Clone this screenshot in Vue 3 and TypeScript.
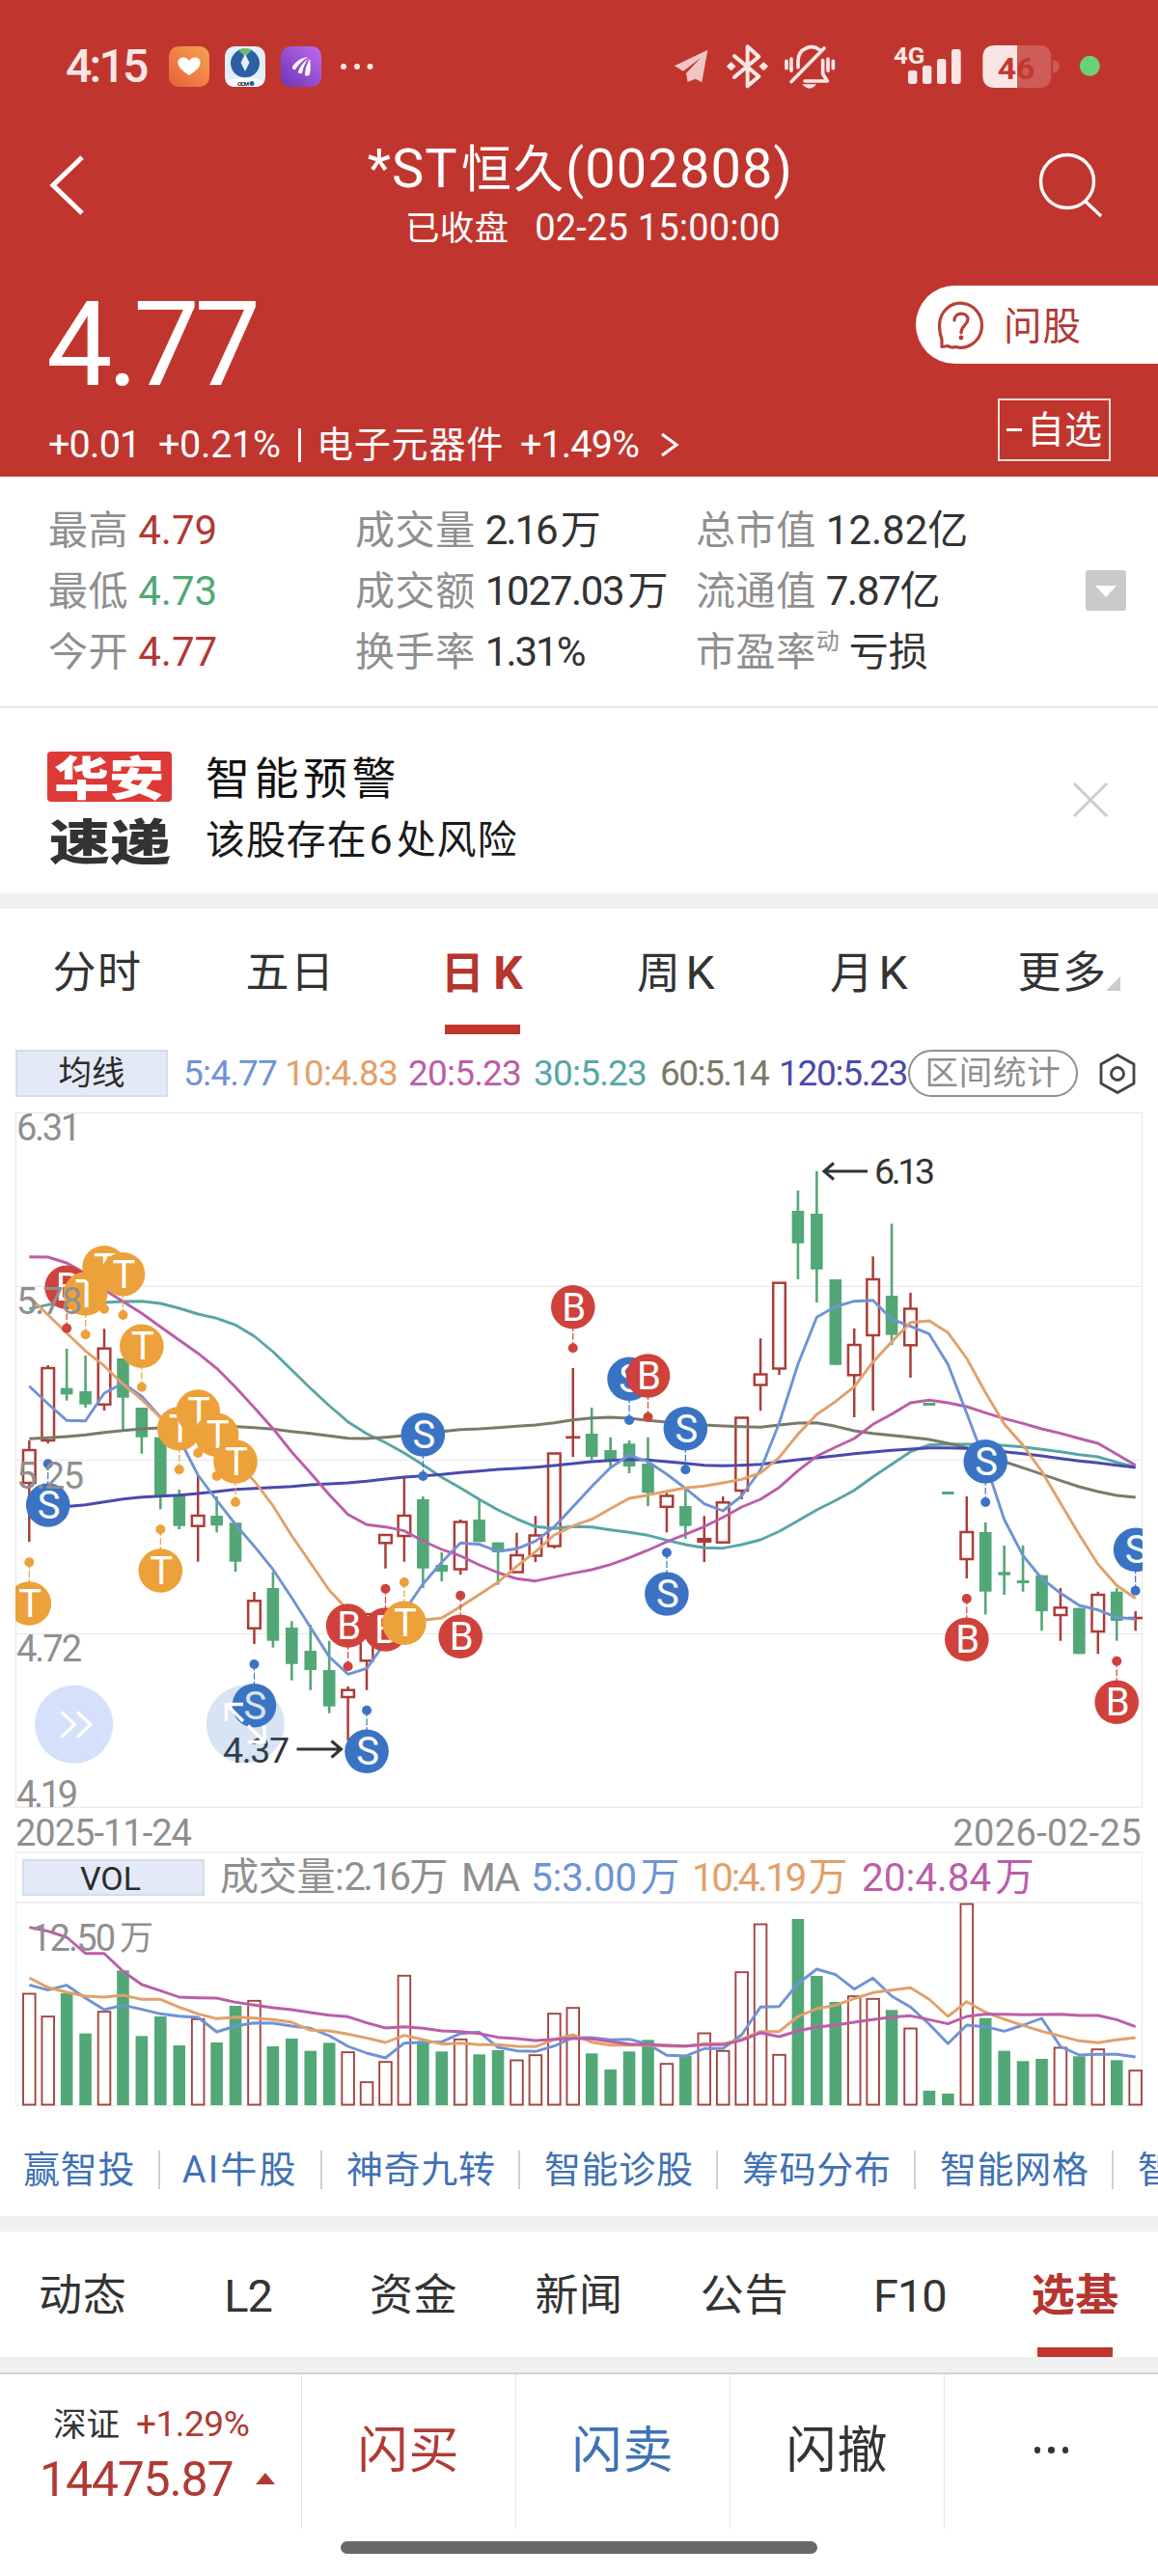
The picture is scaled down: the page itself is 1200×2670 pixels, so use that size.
<script setup lang="ts">
type Kind = 'r' | 'g'
type Candle = [Kind, number, number, number, number]
type Mark = [number, 'T' | 'S' | 'B', number, number]

const X0 = 30.3
const STEP = 19.43
const cx = (i: number): number => X0 + STEP * i

const candles: Candle[] = [
  ['r', 1493, 1503, 1537, 1598], ['r', 1415, 1418, 1493, 1496], ['g', 1398, 1438.7, 1445.3, 1451.7],
  ['g', 1405, 1442, 1455.7, 1459], ['r', 1377.3, 1397.7, 1455.7, 1462], ['g', 1408, 1408, 1448.7, 1482.7],
  ['g', 1459, 1459, 1489.7, 1506.7], ['g', 1489.7, 1489.7, 1550, 1564.3], ['g', 1544, 1549, 1581.7, 1585],
  ['r', 1529, 1571, 1581.7, 1618.7], ['g', 1551, 1571, 1581.3, 1588.3], ['g', 1578.3, 1578.3, 1618.7, 1629],
  ['r', 1650, 1659.3, 1687.7, 1704], ['g', 1629.3, 1646, 1700.7, 1707.7], ['g', 1680.3, 1687, 1724.7, 1741.7],
  ['g', 1684, 1711, 1731, 1751.7], ['g', 1700.7, 1731, 1768.7, 1775.7], ['r', 1748, 1751.7, 1759, 1804],
  ['r', 1672, 1673, 1721.3, 1751.7], ['r', 1591, 1591, 1599.3, 1625.7], ['r', 1531.7, 1571, 1592, 1618.7],
  ['g', 1551, 1554, 1625.7, 1646], ['g', 1609, 1622, 1629, 1639], ['r', 1575, 1577.5, 1626.5, 1632.3],
  ['g', 1554, 1575, 1598.3, 1598.3], ['g', 1598.7, 1598.7, 1609, 1642.7], ['r', 1588.7, 1612, 1629.5, 1630],
  ['r', 1571.3, 1591.5, 1612.5, 1619], ['r', 1506.5, 1506.5, 1602.5, 1605], ['r', 1418, 1489.7, 1489.7, 1510],
  ['g', 1459, 1486, 1510, 1513.3], ['g', 1489.7, 1503, 1513.3, 1521.7], ['g', 1493, 1496.3, 1520, 1527],
  ['g', 1489.7, 1517, 1547.3, 1561], ['r', 1547.3, 1550.5, 1561.8, 1588.3], ['g', 1543.3, 1561, 1581.7, 1595],
  ['r', 1571.3, 1595.2, 1597.7, 1619], ['r', 1551, 1557.3, 1598.7, 1599], ['r', 1469.5, 1469.5, 1545, 1554],
  ['r', 1387.3, 1424.5, 1435.5, 1462.3], ['r', 1329.7, 1329.7, 1418.5, 1425], ['g', 1234, 1255, 1288.7, 1326],
  ['g', 1214, 1258, 1315.7, 1350], ['g', 1326, 1326, 1414.7, 1414.7], ['r', 1377, 1394, 1425.3, 1469],
  ['r', 1302.3, 1326, 1384, 1462.3], ['g', 1268.3, 1343, 1383.7, 1394], ['r', 1340, 1356.5, 1394.3, 1428],
  ['g', 1454, 1454, 1457, 1457], ['g', 1546, 1546, 1549, 1549], ['r', 1551, 1588, 1616, 1636],
  ['g', 1578, 1588, 1649.7, 1673.3], ['g', 1602, 1629.3, 1632.7, 1653], ['g', 1602, 1638, 1641, 1649.7],
  ['g', 1632.7, 1632.7, 1670, 1690.3], ['r', 1646, 1666.3, 1674, 1700.7], ['g', 1666.7, 1666.7, 1714.3, 1714.3],
  ['r', 1649.7, 1653, 1691, 1714.3], ['g', 1646, 1649.7, 1680, 1700.7], ['r', 1670, 1677, 1677, 1690.3],
]

const averages: { color: string; ys: number[] }[] = [
  { color: '#57a6a5', ys: [1356.7, 1352.3, 1350, 1350, 1350, 1349, 1348.7, 1351, 1356, 1362, 1366.3, 1373.3, 1385, 1401, 1420, 1439, 1457, 1473.7, 1486, 1495.3, 1506, 1518.3, 1531.3, 1542.3, 1554, 1565, 1574.3, 1582.3, 1584.3, 1582.3, 1582.7, 1585.7, 1588.3, 1591.3, 1596.3, 1601, 1604.3, 1604.7, 1601, 1596, 1587.3, 1576.3, 1565, 1555.3, 1544.7, 1530.7, 1517.7, 1504.7, 1497.7, 1496.7, 1497, 1497, 1498.3, 1499.7, 1502.3, 1504.7, 1507.7, 1510, 1515.7, 1520.7] },
  { color: '#7a7a68', ys: [1491.3, 1490.3, 1489, 1487.3, 1484.7, 1482.7, 1481, 1480, 1479, 1478.5, 1478, 1478.7, 1479.7, 1481.3, 1483.7, 1485.7, 1488.3, 1490.7, 1491, 1489.7, 1488, 1485.8, 1483.7, 1481.7, 1481, 1479.7, 1478.3, 1477, 1474.7, 1471.7, 1469.7, 1469, 1470, 1472.3, 1474, 1475.7, 1477, 1478, 1478.7, 1479.3, 1477, 1475, 1474.7, 1478.3, 1483, 1485.7, 1487.7, 1489.7, 1492, 1496, 1500.7, 1508, 1515, 1521.3, 1528, 1534.7, 1541, 1546, 1550, 1552] },
  { color: '#4a49ae', ys: [1565, 1563.5, 1561.5, 1559.7, 1556.7, 1553.7, 1551.7, 1550.7, 1549.7, 1548, 1546, 1543.7, 1542.7, 1541.7, 1540.7, 1539, 1538, 1537, 1535.3, 1533, 1531, 1529.7, 1528.3, 1526.3, 1524.7, 1523, 1522, 1520.7, 1519, 1517, 1515, 1513.7, 1512.7, 1513.3, 1515, 1516.7, 1518.7, 1519.3, 1518.7, 1517.7, 1515.3, 1513, 1511, 1509, 1506.7, 1505, 1503.3, 1502, 1500.7, 1500.7, 1501.3, 1502.5, 1504.7, 1506.7, 1509, 1511.7, 1514.3, 1516.3, 1518.7, 1521] },
  { color: '#bb5ea8', ys: [1302.7, 1303, 1309, 1320, 1336.7, 1349, 1361.3, 1375.3, 1389, 1402.7, 1418.3, 1437.7, 1459, 1480.7, 1505, 1526.7, 1549.3, 1569.7, 1580.3, 1582.7, 1586.7, 1597.3, 1606, 1612.7, 1622, 1630, 1636.3, 1638.7, 1634.7, 1630.7, 1627, 1621.7, 1614.7, 1606.7, 1598, 1590.3, 1582.3, 1572.7, 1562, 1554, 1541.7, 1524.3, 1509.3, 1500, 1491, 1476.3, 1465.7, 1454, 1451.3, 1454, 1458, 1464.3, 1470.3, 1475.3, 1481, 1485.7, 1491, 1496, 1507.3, 1518.7] },
  { color: '#6f93d4', ys: [1436.7, 1455, 1472.3, 1472.7, 1444, 1433.7, 1447.3, 1469, 1491, 1529, 1555, 1580, 1602.7, 1626.7, 1656, 1686.7, 1717.3, 1735.3, 1729.3, 1702, 1670, 1641.7, 1619.3, 1599.3, 1600.7, 1608, 1605.3, 1597.3, 1582.7, 1561.7, 1540.7, 1521.3, 1508.3, 1515, 1528, 1542.7, 1558.7, 1566, 1550.5, 1523.5, 1475, 1414, 1365.3, 1354.3, 1348.7, 1347.7, 1367.3, 1374.7, 1382.7, 1414.3, 1465, 1516, 1575, 1612.3, 1636, 1651.3, 1664, 1668.7, 1676.3, 1678.3] },
  { color: '#e2a06a', ys: [1344.3, 1362.7, 1381.7, 1400.3, 1415.7, 1434.7, 1450.7, 1469.3, 1480, 1492, 1503, 1516, 1535, 1560.7, 1591.7, 1620, 1648.3, 1669, 1683, 1685, 1682, 1679.3, 1677, 1665.3, 1652.7, 1640, 1623.3, 1608.3, 1591, 1581.7, 1574.7, 1563.7, 1553, 1549.7, 1545.7, 1542.3, 1540.3, 1537, 1533.3, 1526.7, 1510.7, 1486.5, 1466, 1452.7, 1437.3, 1411.7, 1390.7, 1370.7, 1369, 1381.3, 1408, 1443.3, 1476, 1498, 1525, 1558, 1590.7, 1621.3, 1643.3, 1656.7] },
]

const marks: Mark[] = [
  [0, 'T', 1662, 1619.3], [1, 'S', 1560, 1517.3], [2, 'B', 1334.3, 1376.7], [3, 'T', 1341, 1383.3],
  [4, 'T', 1313.7, 1356.7], [5, 'T', 1320.7, 1363], [6, 'T', 1395.3, 1437.7], [7, 'T', 1628, 1585.3],
  [8, 'T', 1480.7, 1523.3], [9, 'T', 1463, 1506], [10, 'T', 1487.3, 1530], [11, 'T', 1515, 1557],
  [12, 'S', 1767.7, 1725], [17, 'B', 1685, 1727.3], [18, 'S', 1815.3, 1772.7], [19, 'B', 1689, 1646.7],
  [20, 'T', 1682.3, 1640], [21, 'S', 1487, 1530], [23, 'B', 1696.3, 1653.7], [29, 'B', 1354.7, 1397.3],
  [32, 'S', 1429.3, 1472], [33, 'B', 1426, 1468.7], [34, 'S', 1652, 1609.3], [35, 'S', 1480.7, 1523.3],
  [50, 'B', 1699.3, 1657], [51, 'S', 1514.7, 1557], [58, 'B', 1764.3, 1721.7], [59, 'S', 1606.3, 1648.7],
]
const markColor = { T: '#eda13a', S: '#3b73c4', B: '#cf423b' }

const priceLabels: { t: string; y: number; w: number }[] = [
  { t: '6.31', y: 1182, w: 67 }, { t: '5.78', y: 1361.7, w: 68 }, { t: '5.25', y: 1543, w: 70 },
  { t: '4.72', y: 1721.5, w: 68 }, { t: '4.19', y: 1872.5, w: 64 },
]

// Volume series are kept in thirds of a pixel above the panel origin.
const VOL_Y = 1860
const vy = (v: number): number => VOL_Y + v / 3
const volTops = [618, 689, 618, 743, 674, 547, 751, 690, 780, 697, 771, 657, 640, 783, 759, 797, 772, 800, 893, 830, 562, 767, 799, 760, 808, 795, 825, 809, 680, 662, 805, 855, 799, 763, 836, 812, 741, 796, 551, 402, 808, 387, 564, 645, 626, 634, 670, 726, 921, 930, 339, 695, 797, 829, 822, 786, 814, 791, 826, 857]
const volKinds = 'rrggrgggg' + 'rggrggggrrrrggrggrrrr' + 'ggggrgrrrrrgggrrgrggrggggrgrgr'
const volLines: { color: string; vs: number[] }[] = [
  { color: '#6f93d4', vs: [592, 608, 593, 633, 669, 655, 668, 682, 689, 693, 738, 720, 710, 711, 720, 727, 750, 783, 804, 819, 773, 770, 769, 743, 739, 786, 797, 799, 782, 756, 756, 763, 761, 776, 811, 813, 790, 790, 747, 661, 659, 588, 543, 560, 605, 571, 627, 661, 714, 775, 717, 722, 736, 717, 696, 784, 810, 808, 808, 816] },
  { color: '#e2a06a', vs: [570, 600, 615, 627, 630, 624, 637, 637, 661, 682, 697, 692, 695, 700, 708, 733, 735, 745, 757, 771, 749, 762, 776, 773, 778, 778, 783, 784, 762, 747, 770, 779, 779, 779, 782, 783, 775, 775, 761, 737, 737, 690, 666, 655, 635, 616, 608, 601, 637, 690, 644, 677, 699, 718, 736, 751, 766, 772, 763, 756] },
  { color: '#bb5ea8', vs: [413, 425, 444, 494, 494, 550, 591, 610, 630, 632, 633, 646, 655, 663, 669, 678, 686, 691, 710, 726, 722, 727, 735, 737, 743, 755, 759, 765, 761, 758, 760, 768, 776, 777, 780, 782, 778, 778, 764, 741, 753, 735, 723, 717, 708, 700, 692, 688, 700, 713, 690, 683, 683, 685, 684, 683, 687, 687, 700, 722] },
]
const line = (ys: number[]): string => ys.map((y, i) => `${cx(i).toFixed(1)},${y.toFixed(1)}`).join(' ')

const periods = [['分时', ''], ['五日', ''], ['日', 'K'], ['周', 'K'], ['月', 'K'], ['更多', '']]
const maValues = [
  { t: '5:4.77', c: '#6f93d4' }, { t: '10:4.83', c: '#e2a06a' }, { t: '20:5.23', c: '#bb5ea8' },
  { t: '30:5.23', c: '#57a6a5' }, { t: '60:5.14', c: '#7a7a68' }, { t: '120:5.23', c: '#4a49ae' },
]
const tools = ['赢智投', 'AI牛股', '神奇九转', '智能诊股', '筹码分布', '智能网格', '智能']
const sections = ['动态', 'L2', '资金', '新闻', '公告', 'F10', '选基']
</script>

<template>
  <div class="page">
    <header class="top">
      <div class="status">
        <span class="clock">4:15</span>
        <svg class="apps" width="220" height="44" viewBox="0 0 220 44">
          <defs>
            <linearGradient id="ga" x1="1" y1="0" x2="0" y2="1"><stop offset="0" stop-color="#f2a64e" /><stop offset="1" stop-color="#ea5f3c" /></linearGradient>
            <linearGradient id="gb" x1="1" y1="0" x2="0" y2="1"><stop offset="0" stop-color="#c06bf0" /><stop offset="1" stop-color="#6a35b4" /></linearGradient>
          </defs>
          <rect x="0" y="1" width="42" height="42" rx="10" fill="url(#ga)" />
          <path d="M21 31C10 24 9 20 9.500 16.500C10.500 11.500 18 11 21 16C24 11 31.500 11.500 32.500 16.500C33 20 32 24 21 31Z" fill="#fff" />
          <rect x="58" y="1" width="42" height="42" rx="10" fill="#e4eefb" />
          <circle cx="79" cy="18.500" r="15" fill="#2b5fa6" />
          <path d="M72 4.500Q79 2 86 4.500L79 12Z" fill="#6dbb6a" />
          <path d="M79 9L83.500 18L79 27L74.500 18Z" fill="#e4eefb" />
          <path d="M59 37Q79 30 99 37Q97 43 89 43H69Q61 43 59 37Z" fill="#fff" />
          <text x="71" y="42" font-size="6" font-weight="700" fill="#222" textLength="12">CICM</text><circle cx="86" cy="39.500" r="2.500" fill="#2b5fa6" />
          <rect x="116" y="1" width="42" height="42" rx="10" fill="url(#gb)" />
          <path d="M144 12C137 13 131 17 128 22Q128 26 131 25C134 20 138 16 144 12ZM145 13C139 18 135 23 134 28Q135 30 138 29C139 23 141 18 145 13ZM146 14C143 19 141 25 141 31Q144 33 146 30C147 25 147 19 146 14Z" fill="#fff" />
          <g fill="#f9e6e4"><circle cx="181" cy="22" r="3" /><circle cx="195" cy="22" r="3" /><circle cx="208.500" cy="22" r="3" /></g>
        </svg>
        <svg class="signals" width="470" height="70" viewBox="0 0 1410 210">
          <g fill="#f9e6e4">
            <path d="M57 97L160 47L142 148L122 137L98 147L93 120L138 72L84 113Z" opacity=".82" />
            <path d="M243 66L319 130L284 160V37L319 68L243 132" fill="none" stroke="#f9e6e4" stroke-width="12" stroke-linejoin="round" stroke-linecap="round" />
            <path d="M220 98L233 86L246 98L233 111ZM321 98L334 86L347 98L334 111Z" stroke="#f9e6e4" stroke-width="3" stroke-linejoin="round" />
            <g fill="none" stroke="#f9e6e4" stroke-width="11" stroke-linecap="round" stroke-linejoin="round">
              <path d="M420 146L522 42M441 102V82C441 40 485 29 508 47M462 144H532L518 122V80M405 82V104M420 75V112M534 75V112M550 82V104" />
            </g>
            <path d="M454 154H498Q478 180 454 154Z" />
            <text x="738" y="91" font-size="74" font-weight="700" textLength="97" lengthAdjust="spacingAndGlyphs">4G</text>
            <rect x="783" y="111" width="28" height="42" rx="8" /><rect x="828" y="96" width="28" height="57" rx="8" />
            <rect x="873" y="75" width="28" height="78" rx="8" /><rect x="918" y="45" width="29" height="108" rx="8" />
            <path d="M1122 33H1054Q1015 33 1015 72V126Q1015 165 1054 165H1122Z" />
            <path d="M1122 33H1190Q1228 33 1228 72V126Q1228 165 1190 165H1122ZM1233 78Q1254 84 1254 99Q1254 114 1233 120Z" opacity=".22" />
          </g>
          <text x="1061" y="138" font-size="96" font-weight="700" fill="#c43832" textLength="116" lengthAdjust="spacingAndGlyphs">46</text>
          <circle cx="1348" cy="97" r="31.500" fill="#6ad276" />
        </svg>
      </div>

      <div class="titlebar">
        <svg class="back" width="40" height="66" viewBox="0 0 40 66"><path d="M35 4L5 33L35 62" fill="none" stroke="#fff" stroke-width="5" /></svg>
        <div class="title">
          <div class="name">*ST<span>恒久</span>(002808)</div>
          <div class="time"><span>已收盘</span>02-25 15:00:00</div>
        </div>
        <svg class="search" width="70" height="70" viewBox="0 0 70 70"><g fill="none" stroke="#fff" stroke-width="3.400"><circle cx="33" cy="32" r="27.500" /><path d="M51 52L68 68" /></g></svg>
      </div>

      <div class="quote">
        <div class="price">
          <div class="last">4.77</div>
          <div class="change">
            <span class="c1">+0.01</span><span class="c2">+0.21%</span><i></i><span class="c3">电子元器件</span><span class="c4">+1.49%</span>
            <svg width="20" height="26" viewBox="0 0 20 26"><path d="M2 2L17 13L2 24" fill="none" stroke="#fff" stroke-width="3.200" /></svg>
          </div>
        </div>
        <div class="actions">
          <div class="ask">
            <svg width="48" height="50" viewBox="0 0 48 50"><g fill="none" stroke="#b8403a" stroke-width="3.200" stroke-linejoin="round"><path d="M4 47.500V40Q1.500 33 1.500 25A22 23 0 1 1 18 47.500Q14 49 10.500 46.500Z" /><path d="M17 20C17 11 31 11 31 19C31 25 24 25 24 33" stroke-linecap="round" /></g><circle cx="24" cy="38" r="2.400" fill="#b8403a" /></svg>
            <span>问股</span>
          </div>
          <div class="fav"><b></b>自选</div>
        </div>
      </div>
    </header>

    <section class="stats">
      <div class="stat"><label>最高</label><em class="up">4.79</em></div>
      <div class="stat"><label>成交量</label><em class="tighter">2.16<s></s>万</em></div>
      <div class="stat"><label>总市值</label><em>12.82亿</em></div>
      <div class="stat"><label>最低</label><em class="down">4.73</em></div>
      <div class="stat"><label>成交额</label><em class="tight">1027.03<s></s>万</em></div>
      <div class="stat"><label>流通值</label><em class="tight">7.87亿</em></div>
      <div class="stat"><label>今开</label><em class="up">4.77</em></div>
      <div class="stat"><label>换手率</label><em class="tighter">1.31%</em></div>
      <div class="stat"><label>市盈率<sup>动</sup></label><em>亏损</em></div>
      <div class="expand"><i></i></div>
    </section>

    <section class="notice">
      <div class="brand"><div class="b1"><span>华安</span></div><div class="b2"><span>速递</span></div></div>
      <div class="msg"><h3>智能预警</h3><p>该股存在<b>6</b>处风险</p></div>
      <svg width="38" height="38" viewBox="0 0 38 38"><path d="M2 2L36 36M36 2L2 36" stroke="#cdcdcd" stroke-width="3" /></svg>
    </section>

    <nav class="periods">
      <div v-for="(p, i) in periods" :key="i" :class="{ on: i === 2 }"><span>{{ p[0] }}<b v-if="p[1]">{{ p[1] }}</b></span><i v-if="i === 5"></i></div>
    </nav>

    <div class="legend">
      <div class="chip">均线</div>
      <div class="vals"><span v-for="m in maValues" :key="m.t" :style="{ color: m.c }">{{ m.t }}</span></div>
      <div class="range">区间统计</div>
      <svg width="40" height="44" viewBox="0 0 40 44"><g fill="none" stroke="#444" stroke-width="2.800" stroke-linejoin="round"><path d="M20 2.500L37 12V32L20 41.500L3 32V12Z" /><circle cx="20" cy="22" r="6.500" /></g></svg>
    </div>

    <svg class="kline" width="1200" height="722" viewBox="0 1153 1200 722">
      <clipPath id="plot"><rect x="16" y="1153" width="1168" height="722" /></clipPath>
      <g fill="none" stroke="#e9e9e9" stroke-width="1.300">
        <rect x="16.500" y="1153.500" width="1167" height="719.800" />
        <path d="M16 1333.300H1183M16 1513.300H1183M16 1693.300H1183" />
      </g>
      <g clip-path="url(#plot)">
        <g v-for="(c, i) in candles" :key="i">
          <template v-if="c[0] === 'g'">
            <rect :x="cx(i) - 1.300" :y="c[1]" width="2.600" :height="c[4] - c[1]" fill="#55a777" />
            <rect :x="cx(i) - 6.300" :y="c[2]" width="12.600" :height="c[3] - c[2]" fill="#52a776" />
          </template>
          <g v-else fill="none" stroke="#ab3d38" stroke-width="2.500">
            <path :d="`M${cx(i)} ${c[1]}V${c[2]}M${cx(i)} ${c[3]}V${c[4]}`" />
            <rect :x="cx(i) - 6.300" :y="c[2]" width="12.600" :height="Math.max(c[3] - c[2], .1)" />
          </g>
        </g>
        <polyline v-for="a in averages" :key="a.color" :points="line(a.ys)" fill="none" :stroke="a.color" stroke-width="2.900" stroke-linejoin="round" />
        <g v-for="m in marks" :key="m[0]" :fill="markColor[m[1]]">
          <path :d="`M${cx(m[0])} ${m[2]}V${m[3]}`" :stroke="markColor[m[1]]" stroke-width="1.200" stroke-dasharray="7 2" />
          <circle :cx="cx(m[0])" :cy="m[3]" r="5" />
          <circle :cx="cx(m[0])" :cy="m[2]" r="22.800" />
          <text :x="cx(m[0]) + 1" :y="m[2] + 14" fill="#fff" font-size="40" text-anchor="middle">{{ m[1] }}</text>
        </g>
      </g>
      <g fill="#8f8f8f" font-size="38">
        <text v-for="p in priceLabels" :key="p.t" x="17" :y="p.y" :textLength="p.w">{{ p.t }}</text>
      </g>
      <g fill="#333" font-size="37.500">
        <text x="231" y="1827" textLength="69">4.37</text>
        <text x="906" y="1227" textLength="63">6.13</text>
      </g>
      <g fill="none" stroke="#333" stroke-width="3">
        <path d="M307.500 1813H353M343.500 1804.500L353.500 1813L343.500 1821.500M899 1214H854M864 1205.500L854 1214L864 1222.500" />
      </g>
      <circle cx="76.600" cy="1787.300" r="40.500" fill="#d5e0fb" />
      <circle cx="254.300" cy="1787.300" r="40.500" fill="#3b78c5" opacity=".2" />
      <g fill="none" stroke="#fff" stroke-width="3.400">
        <path d="M63.500 1774.500L77.500 1787.500L63.500 1800.500M80 1774.500L94 1787.500L80 1800.500" />
        <path d="M234.500 1784V1766.500H252M235 1767L252 1784M256.500 1805.500H274V1788M273.500 1805L257 1788.500" />
      </g>
    </svg>

    <div class="dates"><span>2025-11-24</span><span class="to">2026-02-25</span></div>

    <div class="vol-head">
      <div class="chip vol">VOL</div>
      <span class="v1">成交量:<u>2.16</u><s></s>万</span><span class="v2">MA</span><span class="v3">5:3.00<s></s>万</span><span class="v4">10:4.19<s></s>万</span><span class="v5">20:4.84<s></s>万</span>
    </div>
    <svg class="volume" width="1200" height="214" viewBox="0 1971 1200 214">
      <path d="M16.500 1971V2182.300H1183.500V1971" fill="none" stroke="#ededed" stroke-width="1.300" />
      <g v-for="(v, i) in volTops" :key="i">
        <rect v-if="volKinds[i] === 'g'" :x="cx(i) - 6.300" :y="vy(v)" width="12.600" :height="2182 - vy(v)" fill="#52a776" />
        <rect v-else :x="cx(i) - 6.300" :y="vy(v) + .5" width="12.600" :height="2181 - vy(v)" fill="#fff" stroke="#a04540" stroke-width="1.900" />
      </g>
      <polyline v-for="a in volLines" :key="a.color" :points="line(a.vs.map(vy))" fill="none" :stroke="a.color" stroke-width="2.900" stroke-linejoin="round" />
      <text x="32" y="2021.500" fill="#8f8f8f" font-size="38" textLength="88">12.50</text>
      <text x="124" y="2021" fill="#8f8f8f" font-size="35">万</text>
    </svg>

    <nav class="tools"><span v-for="(t, i) in tools" :key="i">{{ t }}</span></nav>

    <nav class="sections">
      <div v-for="(s, i) in sections" :key="s" :class="{ on: i === 6, latin: i === 1 || i === 5 }">{{ s }}</div>
    </nav>

    <footer class="trade">
      <div class="index">
        <div class="i1"><span>深证</span><em>+1.29%</em></div>
        <div class="i2">14475.87<i></i></div>
      </div>
      <div class="btn buy">闪买</div>
      <div class="btn sell">闪卖</div>
      <div class="btn">闪撤</div>
      <div class="btn more"><i></i><i></i><i></i></div>
    </footer>
    <div class="home"></div>
  </div>
</template>

<style>
body { margin: 0; background: #fff; }
</style>

<style scoped>
* { box-sizing: border-box; }
.page {
  width: 1200px; height: 2670px; overflow: hidden; background: #fff; color: #333;
  font-family: Roboto, "Noto Sans CJK SC", sans-serif; font-size: 41px;
}
svg { display: block; flex: none; }
em, i, s, u { font-style: normal; text-decoration: none; }
s { display: inline-block; width: 4px; }

.top { height: 494px; background: #c0362f; color: #fff; }
.status { height: 136px; display: flex; align-items: flex-start; }
.clock { margin: 39px 0 0 68px; width: 107px; font-size: 48px; line-height: 60px; font-weight: 500; letter-spacing: -2.700px; color: #f9e6e4; }
.apps { margin-top: 47px; }
.signals { margin: 36px 0 0 285px; }
.titlebar { height: 136px; display: flex; justify-content: space-between; align-items: flex-start; }
.back { margin: 23px 0 0 50px; }
.search { margin: 20px 57px 0 0; }
.title { text-align: center; margin-left: 40px; white-space: nowrap; }
.name { margin-top: 9px; height: 60px; line-height: 60px; font-size: 56px; letter-spacing: 1.100px; font-weight: 400; }
.name span { font-size: 52px; letter-spacing: 2px; margin: 0 0 0 3px; }
.time { margin: 11px 0 0 26px; height: 40px; line-height: 40px; font-size: 38px; letter-spacing: .2px; }
.time span { font-size: 35.500px; margin-right: 27px; }
.quote { display: flex; justify-content: space-between; height: 222px; }
.last { margin: 16px 0 0 48px; height: 140px; line-height: 140px; font-size: 122px; letter-spacing: -5.300px; font-weight: 400; }
.change { margin: 8px 0 0 50px; height: 50px; line-height: 50px; font-size: 39.500px; display: flex; align-items: center; white-space: nowrap; }
.c1 { width: 114px; letter-spacing: -.8px; }
.c2 { width: 145px; letter-spacing: -.3px; }
.change i { width: 3px; height: 35px; background: #fff; }
.c3 { margin-left: 16px; width: 211px; font-size: 38px; letter-spacing: .8px; }
.c4 { width: 145px; letter-spacing: -.9px; }
.actions { display: flex; flex-direction: column; align-items: flex-end; }
.ask { margin-top: 24px; width: 251px; height: 81px; padding-left: 23px; background: #fff; border-radius: 41px 0 0 41px; color: #b03a35; display: flex; align-items: center; font-size: 39.500px; letter-spacing: 1px; }
.ask span { margin: 0 0 5px 20px; }
.fav { margin: 36px 49px 0 0; width: 117px; height: 65px; border: 2px solid #f6dedc; display: flex; align-items: center; font-size: 39px; line-height: 60px; white-space: nowrap; }
.fav b { width: 16px; height: 3.500px; margin: 0 5px 0 7px; background: #fff; }

.stats { position: relative; height: 240px; padding: 24px 0 0 50px; border-bottom: 2px solid #e4e4e4; display: grid; grid-template-columns: 318px 353px 400px; grid-template-rows: repeat(3, 63px); }
.stat { display: flex; align-items: center; line-height: 64px; white-space: nowrap; }
.stat label { color: #8f8f8f; letter-spacing: .6px; margin-right: 10px; }
.stat em { font-size: 42px; }
.stat .tight { letter-spacing: -1.300px; }
.stat .tighter { letter-spacing: -2px; }
.stat .up { color: #b03a35; }
.stat .down { color: #52a776; }
.stat sup { font-size: 24px; line-height: 24px; position: relative; top: -2px; letter-spacing: 0; }
.stat:nth-child(9) em { font-size: 41px; }
.expand { position: absolute; left: 1125px; top: 97px; width: 42px; height: 42px; border-radius: 3px; background: #cacaca; }
.expand i { display: block; margin: 16px 0 0 10px; width: 0; border: 11px solid transparent; border-top: 12px solid #fff; border-bottom: 0; }

.notice { height: 208px; border-bottom: 16px solid #f0f0f0; display: flex; align-items: flex-start; }
.brand { margin: 45px 0 0 49px; width: 129px; font-family: "Noto Sans CJK SC", sans-serif; font-weight: 900; text-align: center; white-space: nowrap; }
.brand span { display: inline-block; }
.b1 { height: 52px; line-height: 48px; font-size: 48px; background: #dd3a37; color: #fff; border-radius: 4px; }
.b1 span { transform: scaleX(1.19); }
.b2 { margin-top: 15px; height: 52px; line-height: 46px; font-size: 50px; color: #333; }
.b2 span { transform: scaleX(1.26); }
.msg { margin: 0 0 0 35px; flex: 1; color: #1a1a1a; }
.msg h3 { margin: 41px 0 0; height: 64px; line-height: 64px; font-size: 46px; letter-spacing: 4.500px; font-weight: 400; color: #111; }
.msg p { margin: 0; height: 64px; line-height: 63px; font-size: 41px; letter-spacing: .9px; }
.msg b { font-weight: 400; font-size: 43px; margin: 0 3px 0 2px; }
.notice > svg { margin: 76px 51px 0 0; }

.periods { height: 130px; display: grid; grid-template-columns: repeat(6, 200px); }
.periods div { display: flex; justify-content: center; line-height: 134px; font-size: 45px; letter-spacing: 1.500px; position: relative; left: 1px; }
.periods b { font-size: 48px; font-weight: inherit; margin-left: 4px; }
.periods .on b { margin-left: 8px; }
.periods .on { color: #b5352f; font-weight: 700; left: 0; }
.periods .on::after { content: ""; position: absolute; left: 61px; top: 120px; width: 78px; height: 10px; background: #c0362f; }
.periods i { position: absolute; left: 145px; top: 70px; border-style: solid; border-width: 0 0 15px 15px; border-color: transparent transparent #ccc transparent; }

.legend { height: 81px; padding: 16px 0 0 16px; display: flex; align-items: flex-start; white-space: nowrap; }
.chip { width: 158px; height: 49px; line-height: 45px; text-align: center; background: #e3e9f6; border: 2px solid #d1ddf1; font-size: 34.500px; color: #2b2b2b; }
.vals { display: grid; grid-template-columns: 105px 128px 130px 131px 123px 133px; width: 750px; margin-left: 16px; line-height: 50px; font-size: 37px; letter-spacing: -.8px; }
.vals span:nth-child(5) { letter-spacing: -1.500px; }
.vals span:nth-child(6) { letter-spacing: -1.300px; }
.range { margin-left: 1px; width: 176px; height: 49px; line-height: 44px; text-align: center; border: 2.500px solid #8f8f8f; border-radius: 25px; font-size: 34.500px; letter-spacing: .8px; color: #8f8f8f; }
.legend > svg { margin: 3px 0 0 21px; }

.dates { height: 44px; padding: 0 17px 0 16px; line-height: 50px; font-size: 38px; letter-spacing: -1px; color: #8f8f8f; display: flex; justify-content: space-between; }
.dates .to { letter-spacing: .4px; }
.vol-head { margin: 0 16px; height: 54px; border: 2px solid #efefef; border-width: 2px 1px; display: flex; align-items: center; font-size: 41px; line-height: 52px; color: #8f8f8f; white-space: nowrap; }
.vol { width: 189px; height: 38px; line-height: 36px; margin-left: 6px; font-size: 34px; padding-right: 6px; }
.v1 { margin-left: 16px; width: 250px; font-size: 40px; letter-spacing: -.3px; }
.v1 u { letter-spacing: -2.800px; }
.v1 s { width: 1px; }
.v2 { width: 72px; letter-spacing: -2px; }
.v3 { width: 167px; color: #6f93d4; font-size: 40.500px; letter-spacing: -.3px; }
.v4 { width: 176px; color: #e2a06a; font-size: 40.500px; letter-spacing: -2.500px; }
.v5 { color: #bb5ea8; font-size: 40.500px; }
.volume { margin-top: -2px; }

.tools { height: 112px; display: flex; align-items: center; overflow: hidden; white-space: nowrap; }
.tools span { flex: none; padding: 0 23.700px 0 24.500px; line-height: 40px; font-size: 38px; letter-spacing: .7px; color: #3f72b5; border-left: 2px solid #d0d0d0; position: relative; top: 8px; }
.tools span:first-child { border-left: 0; padding-left: 24px; }
.tools span:nth-child(2) { padding-left: 23px; letter-spacing: 2.200px; }
.sections { height: 162px; border-top: 16px solid #f0f0f0; border-bottom: 16px solid #f0f0f0; display: grid; grid-template-columns: repeat(7, 1fr); }
.sections div { position: relative; text-align: center; line-height: 134px; font-size: 45px; letter-spacing: .6px; }
.sections .latin { font-size: 47px; letter-spacing: -1px; }
.sections .on { color: #b5352f; font-weight: 700; }
.sections .on::after { content: ""; position: absolute; left: 46px; top: 120px; width: 78px; height: 10px; background: #c0362f; }

.trade { height: 159px; border-top: 2px solid #d4d4d4; display: grid; grid-template-columns: 312px 222px 222px 222px 222px; }
.trade > div + div { border-left: 1.500px solid #e6e6e6; }
.index { padding-top: 25px; }
.i1 { height: 54px; line-height: 54px; padding-left: 55px; display: flex; font-size: 34.500px; }
.i1 em { margin-left: 17px; font-size: 37px; letter-spacing: -.5px; color: #b03a35; }
.i2 { height: 60px; line-height: 60px; padding-left: 41px; font-size: 50px; letter-spacing: -1.200px; color: #b03a35; display: flex; }
.i2 i { margin: 23px 0 0 24px; height: 0; border: 10px solid transparent; border-bottom: 12px solid #b03a35; border-top: 0; }
.btn { display: flex; justify-content: center; line-height: 160px; font-size: 52px; letter-spacing: 1px; }
.buy { color: #b03a35; }
.sell { color: #3f72b5; }
.more { gap: 8px; padding-top: 75px; }
.more i { width: 6.500px; height: 6.500px; border-radius: 50%; background: #333; }
.home { margin: 16px auto 0; width: 494px; height: 13px; border-radius: 7px; background: #696969; }
</style>
